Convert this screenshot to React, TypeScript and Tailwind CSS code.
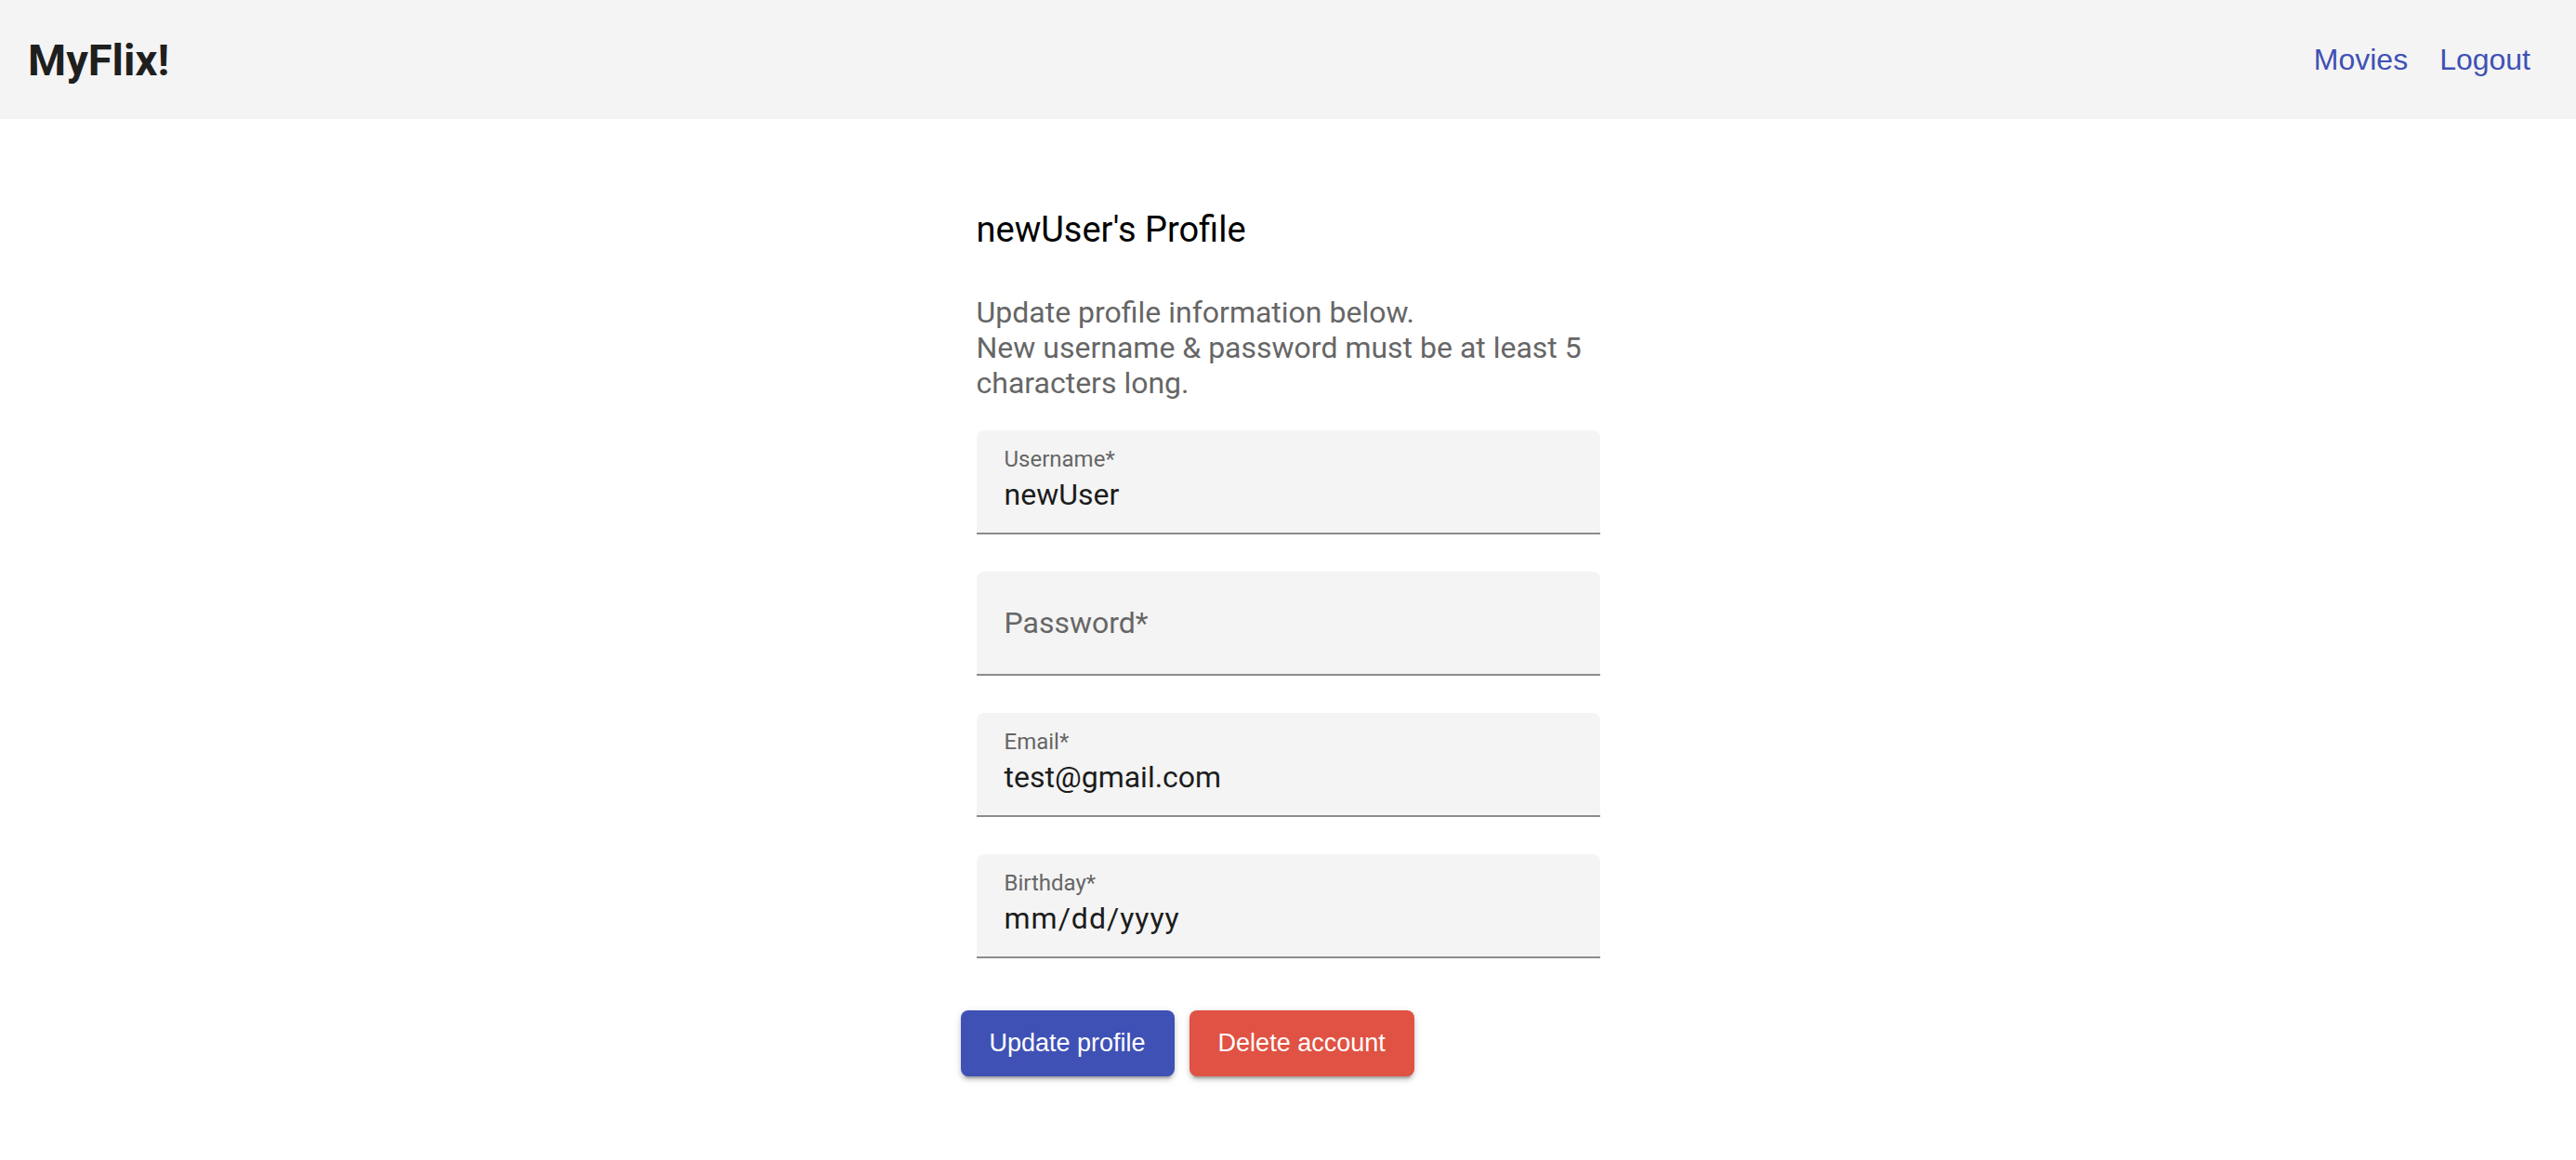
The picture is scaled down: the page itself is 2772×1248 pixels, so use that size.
import React from "react";

const fields = [
  { label: "Username*", value: "newUser" },
  { label: "Password*", value: "" },
  { label: "Email*", value: "test@gmail.com" },
  { label: "Birthday*", value: "mm/dd/yyyy", date: true },
];

const Field: React.FC<{ label: string; value: string; date?: boolean }> = ({ label, value, date }) => {
  if (!value) {
    return (
      <div className="h-[112px] bg-[#f4f4f4] rounded-t-[8px] border-b-2 border-[#8c8c8c] pl-[30px] pt-[39px]">
        <div className="text-[32px] leading-[32px] text-[#666666]">{label}</div>
      </div>
    );
  }
  return (
    <div className="h-[112px] bg-[#f4f4f4] rounded-t-[8px] border-b-2 border-[#8c8c8c] pl-[30px] pt-[19px]">
      <div className="text-[24px] leading-[24px] text-[#666666]">{label}</div>
      <div
        className={`mt-[10px] text-[32px] leading-[32px] text-[#1c1c1c] ${date ? "tracking-[1px]" : ""}`}
      >
        {value}
      </div>
    </div>
  );
};

export default function App() {
  return (
    <div className="min-h-screen bg-white font-['Roboto',_'Liberation_Sans',_sans-serif]">
      <nav className="h-[128px] bg-[#f4f4f4] flex items-center justify-between pl-[30px] pr-[49px]">
        <div className="text-[47px] leading-none font-bold text-[#1f1f1f]">MyFlix!</div>
        <div className="flex items-center gap-[34px] font-['Liberation_Sans',_Arial,_sans-serif] text-[32px] leading-none text-[#3f51b5]">
          <a href="#">Movies</a>
          <a href="#">Logout</a>
        </div>
      </nav>

      <main className="w-[671px] mx-auto pt-[100px]">
        <h1 className="text-[38px] leading-[38px] text-black">newUser's Profile</h1>
        <p className="mt-[51px] text-[32px] leading-[38px] text-[#666666]">
          Update profile information below.
          <br />
          New username &amp; password must be at least 5 characters long.
        </p>

        <div className="mt-[32px] flex flex-col gap-[40px]">
          {fields.map((f) => (
            <Field key={f.label} label={f.label} value={f.value} date={f.date} />
          ))}
        </div>

        <div className="mt-[56px] -ml-[17px] flex gap-[16px] font-['Liberation_Sans',_Arial,_sans-serif]">
          <button className="h-[71px] px-[31px] rounded-[8px] bg-[#3f51b5] text-white text-[27px] shadow-[0_6px_2px_-4px_rgba(0,0,0,0.2),0_4px_4px_0_rgba(0,0,0,0.14),0_2px_10px_0_rgba(0,0,0,0.12)]">
            Update profile
          </button>
          <button className="h-[71px] px-[31px] rounded-[8px] bg-[#e05243] text-white text-[27px] shadow-[0_6px_2px_-4px_rgba(0,0,0,0.2),0_4px_4px_0_rgba(0,0,0,0.14),0_2px_10px_0_rgba(0,0,0,0.12)]">
            Delete account
          </button>
        </div>
      </main>
    </div>
  );
}
